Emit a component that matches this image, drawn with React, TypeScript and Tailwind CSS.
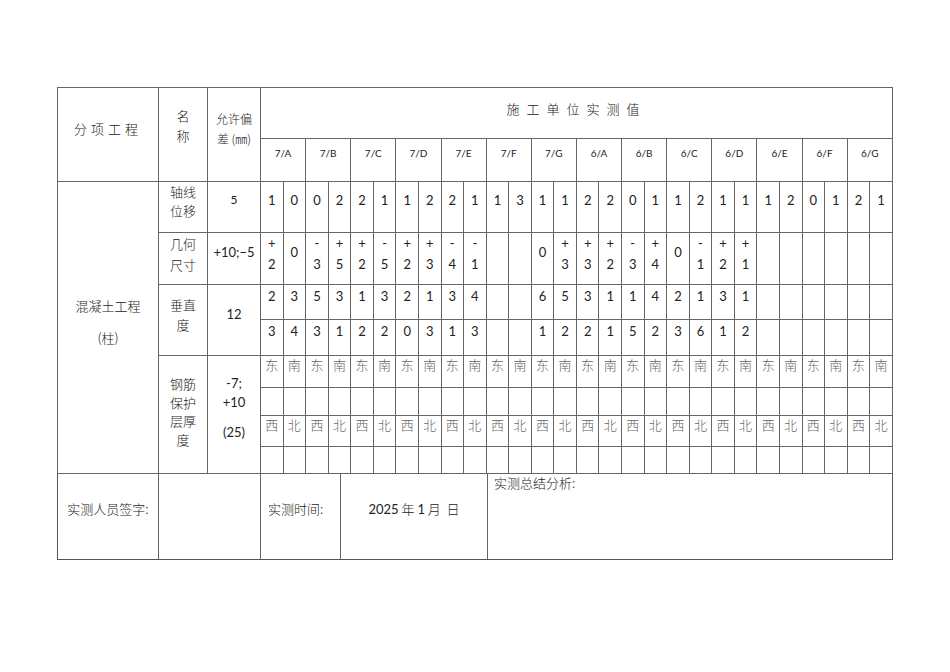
import React from "react";

const groups = ["7/A", "7/B", "7/C", "7/D", "7/E", "7/F", "7/G", "6/A", "6/B", "6/C", "6/D", "6/E", "6/F", "6/G"];

const axis = [1, 0, 0, 2, 2, 1, 1, 2, 2, 1, 1, 3, 1, 1, 2, 2, 0, 1, 1, 2, 1, 1, 1, 2, 0, 1, 2, 1];

// sign + digit, "0" on its own, or empty
const size = [
  "+2", "0", "-3", "+5", "+2", "-5", "+2", "+3", "-4", "-1", "", "",
  "0", "+3", "+3", "+2", "-3", "+4", "0", "-1", "+2", "+1",
  "", "", "", "", "", "",
];

const plumbA = ["2", "3", "5", "3", "1", "3", "2", "1", "3", "4", "", "", "6", "5", "3", "1", "1", "4", "2", "1", "3", "1", "", "", "", "", "", ""];
const plumbB = ["3", "4", "3", "1", "2", "2", "0", "3", "1", "3", "", "", "1", "2", "2", "1", "5", "2", "3", "6", "1", "2", "", "", "", "", "", ""];

const td = "border border-[#666] p-0 text-center align-top";
const cjk = "font-['Noto_Sans_CJK_SC',sans-serif] font-light";

function SizeCell({ v }: { v: string }) {
  if (!v) return <td className={td} />;
  if (v === "0") return <td className={`${td} pt-[9px] leading-5`}>0</td>;
  return (
    <td className={`${td} leading-[21px]`}>
      <div>{v[0]}</div>
      <div>{v[1]}</div>
    </td>
  );
}

export default function App() {
  const blank = Array.from({ length: 28 });
  return (
    <div className="min-h-[672px] w-[950px] bg-white pl-[57px] pt-[87px] font-['Lato','Noto_Sans_CJK_SC',sans-serif] text-[13px] text-[#222]">
      <table className="w-[836px] table-fixed border-collapse border border-[#555]">
        <colgroup>
          <col className="w-[101px]" />
          <col className="w-[49px]" />
          <col className="w-[53px]" />
          {blank.map((_, i) => (
            <col key={i} />
          ))}
        </colgroup>
        <tbody>
          <tr className="h-[51px]">
            <td rowSpan={2} className={`${td} ${cjk} pt-[31px] leading-5 tracking-[4px]`}>
              分项工程
            </td>
            <td rowSpan={2} className={`${td} ${cjk} pt-[18px] leading-5`}>
              <div>名</div>
              <div>称</div>
            </td>
            <td rowSpan={2} className={`${td} ${cjk} pt-[21px] text-[12px] leading-5`}>
              <div>允许偏</div>
              <div>差 (㎜)</div>
            </td>
            <td colSpan={28} className={`${td} ${cjk} pt-[11px] leading-5 tracking-[7px]`}>
              施工单位实测值
            </td>
          </tr>
          <tr className="h-[43px]">
            {groups.map((g) => (
              <td key={g} colSpan={2} className={`${td} pt-[6px] text-[10px] leading-4`}>
                {g}
              </td>
            ))}
          </tr>

          <tr className="h-[51px]">
            <td rowSpan={8} className={`${td} ${cjk} pt-[108px] leading-8`}>
              <div>混凝土工程</div>
              <div>(柱)</div>
            </td>
            <td className={`${td} ${cjk} leading-[19px]`}>
              <div>轴线</div>
              <div>位移</div>
            </td>
            <td className={`${td} pt-[8px] text-[12px] leading-5`}>5</td>
            {axis.map((v, i) => (
              <td key={i} className={`${td} pt-[8px] leading-5`}>
                {v}
              </td>
            ))}
          </tr>

          <tr className="h-[52px]">
            <td className={`${td} ${cjk} leading-[21px]`}>
              <div>几何</div>
              <div>尺寸</div>
            </td>
            <td className={`${td} pt-[9px] leading-5`}>+10;−5</td>
            {size.map((v, i) => (
              <SizeCell key={i} v={v} />
            ))}
          </tr>

          <tr className="h-[35px]">
            <td rowSpan={2} className={`${td} ${cjk} pt-[10px] leading-5`}>
              <div>垂直</div>
              <div>度</div>
            </td>
            <td rowSpan={2} className={`${td} pt-[19px] leading-5`}>
              12
            </td>
            {plumbA.map((v, i) => (
              <td key={i} className={`${td} pt-px leading-5`}>
                {v}
              </td>
            ))}
          </tr>
          <tr className="h-[36px]">
            {plumbB.map((v, i) => (
              <td key={i} className={`${td} pt-px leading-5`}>
                {v}
              </td>
            ))}
          </tr>

          <tr className="h-[32px]">
            <td rowSpan={4} className={`${td} ${cjk} pt-[19px] leading-[18.5px]`}>
              <div>钢筋</div>
              <div>保护</div>
              <div>层厚</div>
              <div>度</div>
            </td>
            <td rowSpan={4} className={`${td} pt-[18px] leading-[19px]`}>
              <div>-7;</div>
              <div>+10</div>
              <div className="mt-[11px]">(25)</div>
            </td>
            {blank.map((_, i) => (
              <td key={i} className={`${td} ${cjk} leading-[18px] text-[#666]`}>
                {i % 2 === 0 ? "东" : "南"}
              </td>
            ))}
          </tr>
          <tr className="h-[28px]">
            {blank.map((_, i) => (
              <td key={i} className={td} />
            ))}
          </tr>
          <tr className="h-[31px]">
            {blank.map((_, i) => (
              <td key={i} className={`${td} ${cjk} leading-[18px] text-[#666]`}>
                {i % 2 === 0 ? "西" : "北"}
              </td>
            ))}
          </tr>
          <tr className="h-[27px]">
            {blank.map((_, i) => (
              <td key={i} className={td} />
            ))}
          </tr>
        </tbody>
      </table>

      <div className={`flex h-[86px] w-[836px] border border-t-0 border-[#555] ${cjk}`}>
        <div className="w-[101px] shrink-0 border-r border-[#666] pt-[25px] text-center leading-5">实测人员签字:</div>
        <div className="w-[102px] shrink-0 border-r border-[#666]" />
        <div className="w-[80px] shrink-0 border-r border-[#666] pl-[7px] pt-[25px] leading-5">实测时间:</div>
        <div className="w-[147px] shrink-0 border-r border-[#666] pt-[25px] text-center leading-5">
          <span className="font-['Lato',sans-serif] font-normal">2025</span> 年 <span className="font-['Lato',sans-serif] font-normal">1</span> 月&nbsp; 日
        </div>
        <div className="flex-1 pl-[6px] leading-[18px]">实测总结分析:</div>
      </div>
    </div>
  );
}
